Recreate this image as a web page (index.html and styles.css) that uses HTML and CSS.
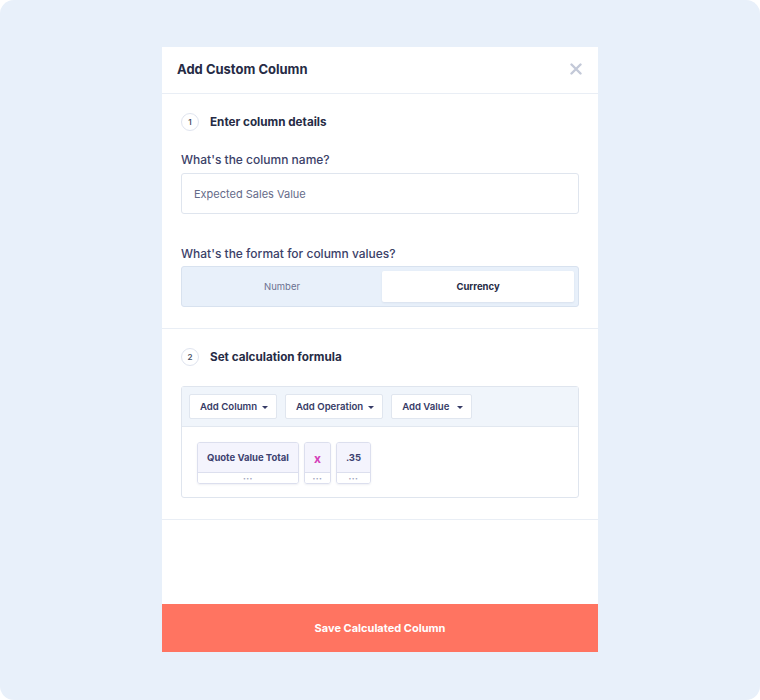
FILE: index.html
```html
<!DOCTYPE html>
<html lang="en">
<head>
    <meta charset="UTF-8">
    <meta name="viewport" content="width=device-width, initial-scale=1.0">
    <title>Add Custom Column</title>
    <link rel="stylesheet" href="styles.css">
</head>
<body>
    <div class="page">
        <div class="modal">
            <div class="modal-header">
                <h1>Add Custom Column</h1>
                <span class="close-btn">
                    <svg width="12" height="12" viewBox="0 0 12 12">
                        <path d="M1.5 1.5 L10.5 10.5 M10.5 1.5 L1.5 10.5" stroke="#c3c9d8" stroke-width="2.4" stroke-linecap="round"/>
                    </svg>
                </span>
            </div>

            <div class="section">
                <div class="step">
                    <span class="step-num">1</span>
                    <h2>Enter column details</h2>
                </div>

                <div class="form-group">
                    <label>What's the column name?</label>
                    <div class="text-input">Expected Sales Value</div>
                </div>

                <div class="form-group">
                    <label>What's the format for column values?</label>
                    <div class="toggle">
                        <span class="toggle-opt">Number</span>
                        <span class="toggle-opt active">Currency</span>
                    </div>
                </div>
            </div>

            <div class="section">
                <div class="step">
                    <span class="step-num">2</span>
                    <h2>Set calculation formula</h2>
                </div>

                <div class="formula">
                    <div class="formula-toolbar">
                        <span class="tool-btn">Add Column <i class="caret"></i></span>
                        <span class="tool-btn">Add Operation <i class="caret"></i></span>
                        <span class="tool-btn">Add Value <i class="caret"></i></span>
                    </div>
                    <div class="formula-body">
                        <div class="chip">
                            <span class="chip-label">Quote Value Total</span>
                            <span class="chip-more">•••</span>
                        </div>
                        <div class="chip">
                            <span class="chip-label op">x</span>
                            <span class="chip-more">•••</span>
                        </div>
                        <div class="chip">
                            <span class="chip-label">.35</span>
                            <span class="chip-more">•••</span>
                        </div>
                    </div>
                </div>
            </div>

            <div class="spacer"></div>

            <button class="save-btn">Save Calculated Column</button>
        </div>
    </div>
</body>
</html>
```

FILE: styles.css
```css
* {
    margin: 0;
    padding: 0;
    box-sizing: border-box;
}

body {
    font-family: 'Inter', 'Liberation Sans', sans-serif;
    background: #ffffff;
    width: 760px;
    height: 700px;
}

.page {
    width: 760px;
    height: 700px;
    background: #e8f0fa;
    border-radius: 14px;
    padding-top: 47px;
    display: flex;
    justify-content: center;
}

.modal {
    width: 436px;
    height: 605px;
    background: #ffffff;
    display: flex;
    flex-direction: column;
}

.modal-header {
    height: 47px;
    padding: 0 16px 3px 15px;
    border-bottom: 1px solid #e9eef5;
    display: flex;
    align-items: center;
    justify-content: space-between;
}

.modal-header h1 {
    font-size: 13px;
    font-weight: 700;
    color: #262b45;
}

.close-btn {
    display: flex;
}

.section {
    padding: 19px 19px 21px;
    border-bottom: 1px solid #e9eef5;
}

.step {
    display: flex;
    align-items: center;
    height: 18px;
}

.step-num {
    width: 18px;
    height: 18px;
    border: 1px solid #dfe4ef;
    border-radius: 50%;
    font-size: 8px;
    font-weight: 600;
    color: #4a4f66;
    display: flex;
    align-items: center;
    justify-content: center;
    margin-right: 11px;
}

.step h2 {
    font-size: 11.7px;
    font-weight: 700;
    color: #262b45;
}

.form-group {
    margin-top: 21px;
}

.form-group + .form-group {
    margin-top: 32px;
}

.form-group label {
    display: block;
    font-size: 12px;
    font-weight: 500;
    color: #3b4168;
    margin-bottom: 6px;
}

.form-group + .form-group label {
    margin-bottom: 5px;
}

.text-input {
    height: 41px;
    border: 1px solid #dfe5ee;
    border-radius: 3px;
    padding: 0 12px;
    display: flex;
    align-items: center;
    font-size: 11px;
    color: #656b89;
}

.toggle {
    height: 41px;
    border: 1px solid #d8e2ef;
    border-radius: 3px;
    background: #e8f0fa;
    padding: 4px;
    display: flex;
    gap: 4px;
}

.toggle-opt {
    flex: 1;
    display: flex;
    align-items: center;
    justify-content: center;
    font-size: 9.5px;
    color: #6b7190;
    border-radius: 2px;
}

.toggle-opt.active {
    background: #ffffff;
    color: #262b45;
    font-weight: 700;
    box-shadow: 0 1px 2px rgba(40, 60, 100, 0.08);
}

.formula {
    margin-top: 20px;
    border: 1px solid #dfe5ee;
    border-radius: 3px;
}

.formula-toolbar {
    height: 40px;
    background: #f0f5fb;
    border-bottom: 1px solid #e2e8f0;
    padding: 0 7px;
    display: flex;
    align-items: center;
    gap: 8px;
}

.tool-btn {
    height: 25px;
    background: #ffffff;
    border: 1px solid #e0e6ef;
    border-radius: 2px;
    padding: 0 8px 0 10px;
    display: flex;
    align-items: center;
    font-size: 9.6px;
    font-weight: 600;
    color: #363b66;
}

.caret {
    display: inline-block;
    margin-left: 5px;
    margin-top: 2px;
    border-left: 3px solid transparent;
    border-right: 3px solid transparent;
    border-top: 3px solid #363b66;
}

.tool-btn:last-child .caret {
    margin-left: 8px;
}

.formula-body {
    height: 70px;
    padding: 15px 15px;
    display: flex;
    align-items: flex-start;
    gap: 5px;
}

.chip {
    border: 1px solid #dcdfee;
    border-radius: 3px;
    box-shadow: 0 1px 2px rgba(50, 60, 120, 0.08);
    display: flex;
    flex-direction: column;
    overflow: hidden;
}

.chip-label {
    height: 30px;
    padding: 0 9px;
    background: #f4f4fd;
    display: flex;
    align-items: center;
    justify-content: center;
    font-size: 9.5px;
    font-weight: 700;
    color: #3d4270;
    border-bottom: 1px solid #dcdfee;
}

.chip-label.op {
    color: #d43fb9;
    font-size: 12px;
    padding: 2px 9px 0;
}

.chip-more {
    height: 10px;
    font-size: 5px;
    letter-spacing: 0.5px;
    color: #a0a4bc;
    display: flex;
    align-items: center;
    justify-content: center;
    background: #ffffff;
}

.spacer {
    flex: 1;
}

.save-btn {
    height: 48px;
    border: none;
    background: #ff7461;
    color: #ffffff;
    font-family: inherit;
    font-size: 11px;
    font-weight: 700;
    cursor: pointer;
}
```
